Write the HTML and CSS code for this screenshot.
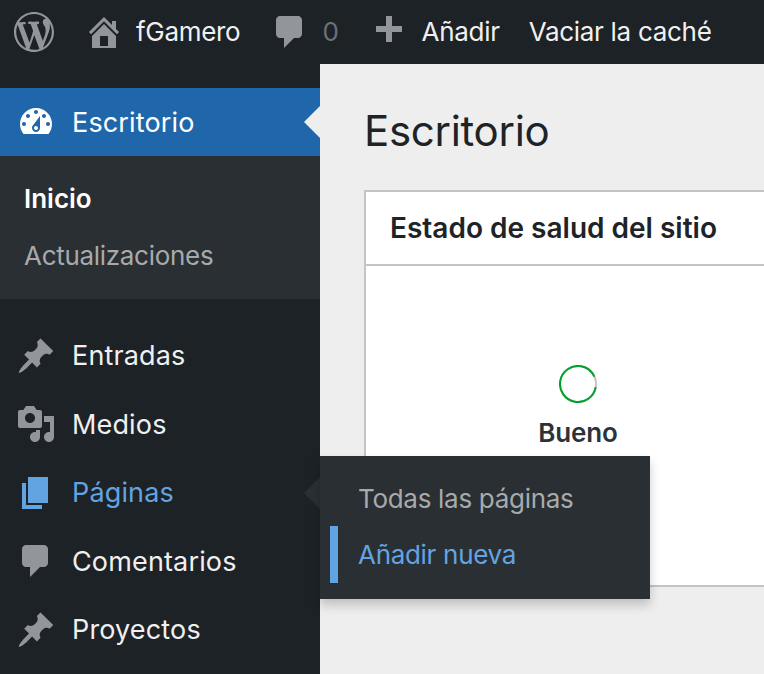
FILE: index.html
```html
<!DOCTYPE html>
<html lang="es">
<head>
<meta charset="utf-8">
<title>Escritorio</title>
<link rel="stylesheet" href="styles.css">
</head>
<body>
<header class="bar">
  <svg class="ico logo" viewBox="0 0 20 20"><path d="M20 10c0-5.510-4.490-10-10-10C4.480 0 0 4.490 0 10c0 5.520 4.480 10 10 10 5.510 0 10-4.480 10-10zM7.780 15.370L4.370 6.220c.55-.02 1.170-.08 1.170-.08.5-.06.44-1.130-.06-1.110 0 0-1.450.11-2.370.11-.18 0-.37 0-.58-.01C4.120 2.690 6.890 1.030 10 1.030c2.320 0 4.430.87 6.030 2.340-.68-.11-1.650.39-1.650 1.580 0 .74.45 1.360.9 2.100.35.61.55 1.360.55 2.460 0 1.490-1.400 5-1.400 5l-3.030-8.370c.54-.02.82-.17.82-.17.5-.05.44-1.250-.06-1.220 0 0-1.440.12-2.380.12-.87 0-2.330-.12-2.330-.12-.5-.03-.56 1.200-.06 1.220l.92.080 1.260 3.410zM17.410 10c.24-.64.74-1.870.43-4.250.7 1.290 1.050 2.710 1.050 4.250 0 3.290-1.730 6.240-4.400 7.780.97-2.590 1.940-5.200 2.920-7.780zM6.100 18.090C3.120 16.650 1.110 13.530 1.110 10c0-1.300.23-2.480.72-3.590C3.250 10.300 4.670 14.200 6.100 18.090zm4.030-6.630l2.580 6.980c-.86.29-1.760.45-2.710.45-.79 0-1.570-.11-2.300-.33.81-2.380 1.620-4.740 2.430-7.100z"/></svg>
  <svg class="ico home" viewBox="0 0 20 20"><path fill-rule="evenodd" d="M16 8.500l1.530 1.530-1.060 1.060L10 4.620l-6.470 6.470-1.060-1.060L10 2.500l4 4v-2h2v4zm-6-2.460l6 5.990V18H4v-5.970zM12 17v-5H8v5h4z"/></svg>
  <span class="bar-text site">fGamero</span>
  <svg class="ico comment" viewBox="0 0 20 20"><path d="M5 2h9c1.100 0 2 .9 2 2v7c0 1.100-.9 2-2 2h-2l-5 5v-5H5c-1.100 0-2-.9-2-2V4c0-1.100.9-2 2-2z"/></svg>
  <span class="bar-text count">0</span>
  <svg class="ico plus" viewBox="0 0 20 20"><path d="M17 7v3h-5v5H9v-5H4V7h5V2h3v5h5z"/></svg>
  <span class="bar-text add">Añadir</span>
  <span class="bar-text cache">Vaciar la caché</span>
</header>
<div class="layout">
  <nav class="side">
    <div class="item current">
      <svg class="ico" viewBox="0 0 20 20"><path fill-rule="evenodd" d="M3.760 16h12.480c1.100-1.370 1.760-3.110 1.760-5 0-4.420-3.580-8-8-8s-8 3.580-8 8c0 1.890.66 3.630 1.760 5zM10 4c.55 0 1 .45 1 1s-.45 1-1 1-1-.45-1-1 .45-1 1-1zM6 6c.55 0 1 .45 1 1s-.45 1-1 1-1-.45-1-1 .45-1 1-1zm8 0c.55 0 1 .45 1 1s-.45 1-1 1-1-.45-1-1 .45-1 1-1zm-5.370 5.550L12 7v6c0 1.100-.9 2-2 2s-2-.9-2-2c0-.57.24-1.080.63-1.450zM4 10c.55 0 1 .45 1 1s-.45 1-1 1-1-.45-1-1 .45-1 1-1zm12 0c.55 0 1 .45 1 1s-.45 1-1 1-1-.45-1-1 .45-1 1-1zm-5 3c0-.55-.45-1-1-1s-1 .45-1 1 .45 1 1 1 1-.45 1-1z"/></svg>
      <span>Escritorio</span>
    </div>
    <div class="sub">
      <div class="sub-item strong">Inicio</div>
      <div class="sub-item">Actualizaciones</div>
    </div>
    <div class="menu">
      <div class="item">
        <svg class="ico" viewBox="0 0 20 20"><path d="M10.440 3.020l1.820-1.820 6.360 6.350-1.830 1.820c-1.050-.68-2.480-.57-3.410.36l-.75.75c-.92.93-1.040 2.350-.35 3.410l-1.830 1.820-2.410-2.410-2.800 2.790c-.42.42-3.380 2.710-3.800 2.290s1.860-3.390 2.280-3.810l2.790-2.790L4.100 9.360l1.830-1.820c1.050.69 2.480.57 3.400-.36l.75-.75c.93-.92 1.050-2.350.36-3.410z"/></svg>
        <span>Entradas</span>
      </div>
      <div class="item">
        <svg class="ico" viewBox="0 0 20 20"><path fill-rule="evenodd" d="M13 11V4c0-.55-.45-1-1-1h-1.670L9 1H5L3.670 3H2c-.55 0-1 .45-1 1v7c0 .55.45 1 1 1h10c.55 0 1-.45 1-1zM7 4.500c1.380 0 2.500 1.120 2.500 2.500S8.380 9.500 7 9.500 4.500 8.380 4.500 7 5.620 4.500 7 4.500zM14 6h5v10.500c0 1.380-1.120 2.500-2.500 2.500S14 17.880 14 16.500s1.120-2.500 2.500-2.500c.17 0 .34.02.5.05V9h-3V6zm-4 8.050V13h2v3.500c0 1.380-1.120 2.500-2.500 2.500S7 17.880 7 16.500 8.120 14 9.500 14c.17 0 .34.02.5.05z"/></svg>
        <span>Medios</span>
      </div>
      <div class="item hover">
        <svg class="ico" viewBox="0 0 20 20"><path d="M6 15V2h10v13H6zm-1 1h8v2H3V5h2v11z"/></svg>
        <span>Páginas</span>
        <div class="fly">
          <div class="fly-item">Todas las páginas</div>
          <div class="fly-item active">Añadir nueva</div>
        </div>
      </div>
      <div class="item">
        <svg class="ico" viewBox="0 0 20 20"><path d="M5 2h9c1.100 0 2 .9 2 2v7c0 1.100-.9 2-2 2h-2l-5 5v-5H5c-1.100 0-2-.9-2-2V4c0-1.100.9-2 2-2z"/></svg>
        <span>Comentarios</span>
      </div>
      <div class="item">
        <svg class="ico" viewBox="0 0 20 20"><path d="M10.440 3.020l1.820-1.820 6.360 6.350-1.830 1.820c-1.050-.68-2.480-.57-3.410.36l-.75.75c-.92.93-1.040 2.350-.35 3.410l-1.830 1.820-2.410-2.410-2.800 2.790c-.42.42-3.380 2.710-3.800 2.290s1.860-3.390 2.280-3.810l2.790-2.790L4.100 9.360l1.830-1.820c1.050.69 2.480.57 3.400-.36l.75-.75c.93-.92 1.050-2.350.36-3.410z"/></svg>
        <span>Proyectos</span>
      </div>
    </div>
  </nav>
  <main class="main">
    <h1 class="title">Escritorio</h1>
    <section class="card">
      <h2 class="card-head">Estado de salud del sitio</h2>
      <div class="card-body">
        <div class="health">
          <svg class="gauge" viewBox="0 0 38 38">
            <circle class="gauge-track" cx="19" cy="19" r="18"/>
            <circle class="gauge-bar" cx="19" cy="19" r="18" pathLength="100" stroke-dasharray="90.5 100" transform="rotate(10 19 19)"/>
          </svg>
          <div class="health-label">Bueno</div>
        </div>
      </div>
    </section>
  </main>
</div>
</body>
</html>
```
FILE: styles.css
```css
* { box-sizing: border-box; }
html, body { margin: 0; height: 674px; overflow: hidden; }
body { font-family: Inter, "Liberation Sans", sans-serif; background: #eeeeee; color: #1d2327; font-size: 26px; letter-spacing: -.3px; }
.ico { width: 40px; height: 40px; flex: none; display: block; fill: currentColor; }

.bar { height: 64px; background: #1d2226; color: #92969c; display: flex; align-items: center; padding-left: 14px; }
.bar-text { color: #f0f0f1; line-height: 64px; white-space: nowrap; }
.home { margin-left: 30px; }
.site { margin-left: 12px; }
.comment { margin-left: 30px; }
.count { color: #6b7176; margin-left: 12px; }
.plus { margin-left: 29px; }
.add { margin-left: 14px; }
.cache { margin-left: 29px; }

.layout { display: flex; height: 610px; }
.side { width: 320px; flex: none; background: #1d2226; padding-top: 24px; color: #f0f0f1; }
.item { position: relative; height: 68.5px; display: flex; align-items: center; gap: 16px; padding-left: 16px; font-size: 27px; letter-spacing: .15px; }
.item .ico { color: #92969c; }
.current { height: 68px; background: #2066aa; color: #fff; }
.current .ico { color: #fff; }
.current::after { content: ""; position: absolute; right: 0; top: 18px; border: 16px solid transparent; border-left: 0; border-right-color: #eeeeee; }
.sub { background: #2a2f33; padding: 14px 0 15px 24px; color: #a7aaad; }
.sub-item { height: 57px; line-height: 57px; }
.strong { color: #fff; font-weight: 600; letter-spacing: 0; }
.menu { padding-top: 22.4px; }

.hover { color: #62a4e2; }
.hover .ico { color: #62a4e2; }
.hover::after { content: ""; position: absolute; right: 0; top: 19px; border: 16px solid transparent; border-left: 0; border-right-color: #2a2f33; }
.fly { position: absolute; left: 320px; top: -2.4px; width: 330px; height: 143px; padding: 14px 0 16px 10px; background: #2a2f33; box-shadow: 0 6px 10px rgba(0, 0, 0, .2); z-index: 2; font-size: 26px; letter-spacing: -.3px; }
.fly-item { height: 56px; line-height: 58px; padding-left: 28px; color: #a7aaad; }
.active { height: 57px; border-left: 8px solid #62a4e2; padding-left: 20px; color: #62a4e2; }

.main { flex: 1; min-width: 0; padding-left: 44px; overflow: hidden; }
.title { margin: 0; height: 126px; line-height: 134px; font-size: 42px; font-weight: 400; }
.card { width: 430px; height: 397px; background: #fff; border: 2px solid #c3c4c7; }
.card-head { margin: 0; height: 74px; line-height: 72px; padding-left: 24px; border-bottom: 2px solid #c3c4c7; font-size: 28px; font-weight: 600; letter-spacing: 0; }
.health { width: 424px; padding-top: 99px; display: flex; flex-direction: column; align-items: center; }
.gauge { width: 38px; height: 38px; display: block; fill: none; stroke-width: 2; }
.gauge-track { stroke: #c3c4c7; }
.gauge-bar { stroke: #00a32a; }
.health-label { margin-top: 15px; line-height: 30px; font-size: 26px; font-weight: 600; letter-spacing: -.15px; color: #2c3338; }
```
